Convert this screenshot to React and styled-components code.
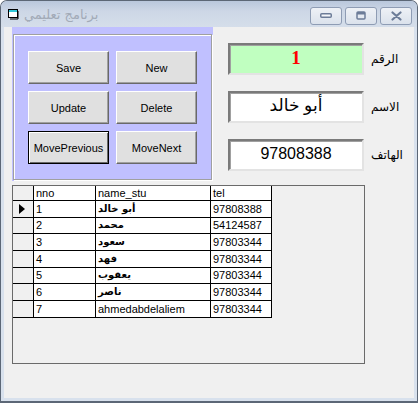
import React from "react";
import styled, { createGlobalStyle } from "styled-components";

const GlobalStyle = createGlobalStyle`
  html, body {
    margin: 0;
    padding: 0;
    background: #ffffff;
  }
  * {
    box-sizing: border-box;
  }
`;

const Window = styled.div`
  width: 418px;
  height: 403px;
  display: flex;
  flex-direction: column;
  background: #d8e1ed;
  border: 1px solid #5c6776;
  border-bottom-width: 2px;
  border-radius: 7px 7px 0 0;
  overflow: hidden;
  font-family: "Liberation Sans", "DejaVu Sans", sans-serif;
`;

const TitleBar = styled.div`
  height: 26px;
  flex: none;
  display: flex;
  align-items: center;
  padding: 0 5px 0 7px;
  background: linear-gradient(#b9c7dc, #cdd7e6 40%, #d5deea);
`;

const TitleText = styled.div`
  margin-left: 4px;
  flex: 1;
  font-family: "DejaVu Sans", sans-serif;
  font-size: 13px;
  color: #a2aab7;
`;

const CaptionButtons = styled.div`
  display: flex;
  gap: 3px;
  margin-top: 3px;
`;

const CaptionButton = styled.div`
  width: 32px;
  height: 18px;
  border: 1px solid #8e9cb4;
  border-radius: 3px;
  background: linear-gradient(#eef1f6, #dbe2ec);
  display: flex;
  align-items: center;
  justify-content: center;
`;

const Client = styled.div`
  flex: 1;
  margin: 0 3px 3px 3px;
  background: #f0f0f0;
  display: flex;
  flex-direction: column;
  padding-left: 8px;
`;

const TopRow = styled.div`
  display: flex;
`;

const Panel = styled.div`
  width: 201px;
  height: 154px;
  background: #c0c0ff;
  padding: 7px 1px 1px 1px;
`;

const Frame = styled.div`
  width: 199px;
  height: 146px;
  border: 1px solid #a0a0a0;
  box-shadow: inset 1px 1px 0 #ffffff, 1px 1px 0 #ffffff;
  padding: 16px 0 0 14px;
  display: grid;
  grid-template-columns: 81px 81px;
  grid-auto-rows: 33px;
  gap: 7px;
  align-content: start;
`;

const Button = styled.div`
  background: #e0e0e0;
  border: 1px solid;
  border-color: ${(p) => (p.$focused ? "#000" : "#fff #696969 #696969 #fff")};
  box-shadow: ${(p) =>
    p.$focused
      ? "inset 1px 1px 0 #fff, inset -1px -1px 0 #696969"
      : "inset -1px -1px 0 #a0a0a0"};
  display: flex;
  align-items: center;
  justify-content: center;
  font-size: 11px;
  color: #000;
`;

const Form = styled.div`
  margin: 16px 0 0 15px;
  display: grid;
  grid-template-columns: 136px auto;
  grid-auto-rows: 32px;
  row-gap: 16px;
  column-gap: 7px;
  align-items: center;
`;

const Field = styled.div`
  height: 32px;
  background: ${(p) => p.$bg || "#ffffff"};
  border: 2px solid;
  border-color: #7a7a7a #e3e3e3 #e3e3e3 #7a7a7a;
  box-shadow: inset 1px 1px 0 #a0a0a0;
  display: flex;
  align-items: center;
  justify-content: center;
  padding-bottom: 3px;
  color: ${(p) => p.$color || "#000"};
  font-family: ${(p) =>
    p.$serif ? '"Liberation Serif", serif' : '"Liberation Sans", "DejaVu Sans", sans-serif'};
  font-weight: ${(p) => (p.$bold ? 700 : 400)};
  font-size: ${(p) => p.$size || 16}px;
`;

const Label = styled.div`
  font-family: "DejaVu Sans", sans-serif;
  font-size: 12px;
  color: #000;
`;

const DataGrid = styled.div`
  margin-top: 4px;
  width: 353px;
  height: 179px;
  border: 1px solid #6a6a6a;
  background: #f0f0f0;
`;

const Table = styled.div`
  display: grid;
  grid-template-columns: 21px 62px 115px 61px;
  grid-template-rows: 15px repeat(7, 16.67px);
  width: fit-content;
`;

const Cell = styled.div`
  border-right: 1px solid #000;
  border-bottom: 1px solid #000;
  background: ${(p) => (p.$head ? "#f0f0f0" : "#ffffff")};
  line-height: 14px;
  padding-left: 2px;
  white-space: nowrap;
  overflow: hidden;
  color: #000;
  display: flex;
  align-items: center;
  font-family: ${(p) =>
    p.$arabic ? '"DejaVu Sans", sans-serif' : '"Liberation Sans", sans-serif'};
  font-weight: ${(p) => (p.$arabic ? 700 : 400)};
  font-size: ${(p) => (p.$arabic ? 10 : 11)}px;
`;

const Pointer = styled.span`
  width: 0;
  height: 0;
  margin-left: 4px;
  border-top: 5px solid transparent;
  border-bottom: 5px solid transparent;
  border-left: 6px solid #000;
`;

const rows = [
  ["1", "أبو خالد", "97808388"],
  ["2", "محمد", "54124587"],
  ["3", "سعود", "97803344"],
  ["4", "فهد", "97803344"],
  ["5", "يعقوب", "97803344"],
  ["6", "ناصر", "97803344"],
  ["7", "ahmedabdelaliem", "97803344"],
];

function AppIcon() {
  return (
    <svg width="12" height="11" viewBox="0 0 12 11">
      <rect x="0.5" y="0.5" width="9" height="8" fill="#fff" stroke="#000" />
      <rect x="1" y="1" width="8" height="2" fill="#30c8d8" />
      <path d="M10 2v8H2" fill="none" stroke="#000" />
    </svg>
  );
}

function App() {
  return (
    <>
      <GlobalStyle />
      <Window>
        <TitleBar>
          <AppIcon />
          <TitleText>برنامج تعليمي</TitleText>
          <CaptionButtons>
            <CaptionButton>
              <svg width="12" height="5" viewBox="0 0 12 5">
                <rect x="0.75" y="0.75" width="10.5" height="3.5" rx="1" fill="#f4f6fa" stroke="#6c7c98" strokeWidth="1.5" />
              </svg>
            </CaptionButton>
            <CaptionButton>
              <svg width="10" height="9" viewBox="0 0 10 9">
                <rect x="1" y="1" width="8" height="7" rx="1" fill="none" stroke="#6c7c98" strokeWidth="1.5" />
                <rect x="1" y="1" width="8" height="2.5" fill="#6c7c98" />
              </svg>
            </CaptionButton>
            <CaptionButton>
              <svg width="11" height="10" viewBox="0 0 11 10">
                <path d="M1.5 1.5l8 7M9.5 1.5l-8 7" stroke="#6c7c98" strokeWidth="2.2" strokeLinecap="round" />
              </svg>
            </CaptionButton>
          </CaptionButtons>
        </TitleBar>
        <Client>
          <TopRow>
            <Panel>
              <Frame>
                <Button>Save</Button>
                <Button>New</Button>
                <Button>Update</Button>
                <Button>Delete</Button>
                <Button $focused>MovePrevious</Button>
                <Button>MoveNext</Button>
              </Frame>
            </Panel>
            <Form>
              <Field $bg="#c0ffc0" $color="#ff0000" $serif $bold $size={19}>
                1
              </Field>
              <Label>الرقم</Label>
              <Field $size={17}>أبو خالد</Field>
              <Label>الاسم</Label>
              <Field>97808388</Field>
              <Label>الهاتف</Label>
            </Form>
          </TopRow>
          <DataGrid>
            <Table>
              <Cell $head />
              <Cell>nno</Cell>
              <Cell>name_stu</Cell>
              <Cell>tel</Cell>
              {rows.map((r, i) => (
                <React.Fragment key={r[0]}>
                  <Cell $head>{i === 0 && <Pointer />}</Cell>
                  <Cell>{r[0]}</Cell>
                  <Cell $arabic={/[\u0600-\u06FF]/.test(r[1])}>{r[1]}</Cell>
                  <Cell>{r[2]}</Cell>
                </React.Fragment>
              ))}
            </Table>
          </DataGrid>
        </Client>
      </Window>
    </>
  );
}

export default App;
